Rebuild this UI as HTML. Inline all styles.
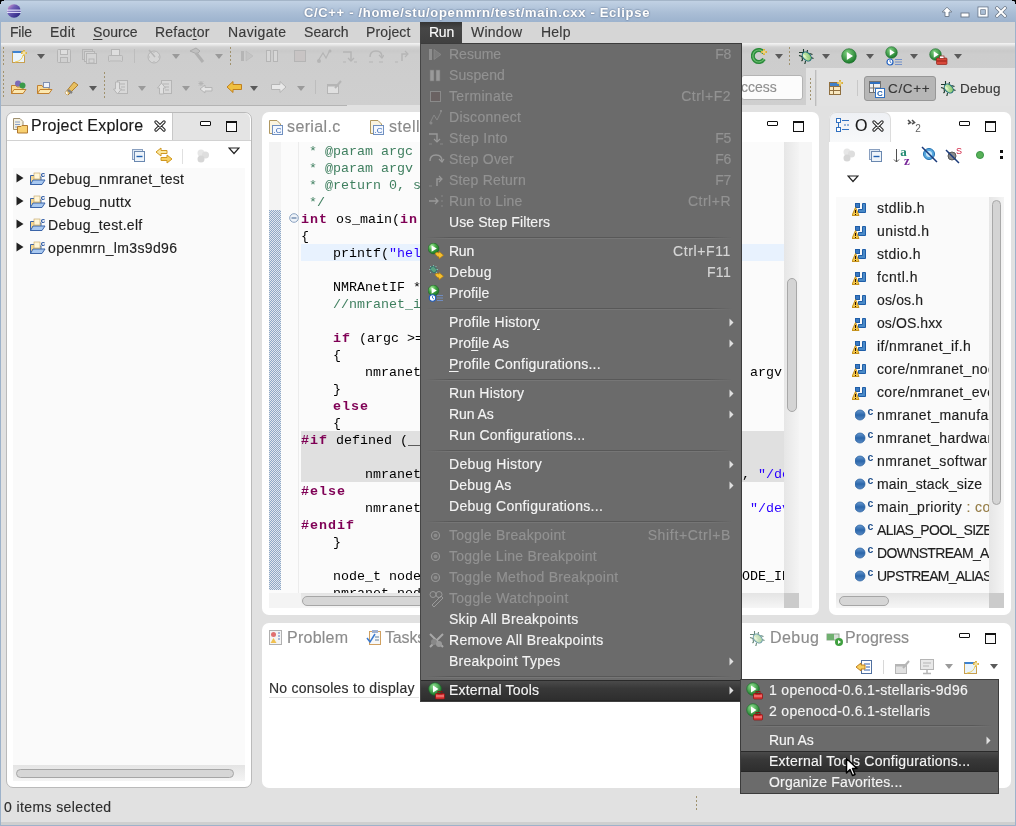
<!DOCTYPE html>
<html><head><meta charset="utf-8"><style>
*{box-sizing:border-box;margin:0;padding:0}
html,body{width:1016px;height:826px;overflow:hidden;background:#e1e1e1}
body{position:relative;font-family:"Liberation Sans",sans-serif;font-size:14px;letter-spacing:0.1px;color:#2e2e2e}
.a{position:absolute;display:block}
.t{position:absolute;white-space:nowrap;line-height:16px;will-change:transform;-webkit-text-stroke:0.15px currentColor}
u{text-underline-offset:1.5px}
.m{position:absolute;white-space:pre;will-change:transform;font-family:"Liberation Mono",monospace;font-size:13.33px;letter-spacing:0;line-height:17px;color:#000}
.k{color:#7f0055;font-weight:bold;letter-spacing:1px}
.c{color:#3f7f5f}
.s{color:#2a00ff}
</style></head><body>
<div class="a" style="left:0px;top:0px;width:1016px;height:22px;background:linear-gradient(#c3d3e5,#a9bdd5 60%,#9db3ce)"></div>
<div class="t" style="left:0px;top:5px;width:954px;text-align:center;color:#fff;font-weight:bold;font-size:13px;letter-spacing:0.68px;text-shadow:0 0 2px #4d6280,0 0 1px #4d6280">C/C++ - /home/stu/openmrn/test/main.cxx - Eclipse</div>
<svg class="a" style="left:6px;top:4px;" width="16" height="14" viewBox="0 0 16 14"><defs><linearGradient id="eg" x1="0" y1="0" x2="1" y2="1"><stop offset="0" stop-color="#e8a0d0"/><stop offset="0.35" stop-color="#7060b8"/><stop offset="1" stop-color="#1c1a78"/></linearGradient></defs><circle cx="8" cy="7" r="6.8" fill="url(#eg)"/><rect x="1" y="5.6" width="14" height="1.1" fill="#e8e8ff"/><rect x="1" y="7.8" width="14" height="1.1" fill="#e8e8ff"/></svg>
<svg class="a" style="left:941px;top:6px;" width="12" height="12" viewBox="0 0 12 12"><path d="M6 1.2 L10.8 6 L8 6 L8 10.5 L4 10.5 L4 6 L1.2 6 Z" fill="#fff" stroke="#6c7888" stroke-width="0.9" stroke-linejoin="round"/></svg>
<svg class="a" style="left:960px;top:12px;" width="10" height="6" viewBox="0 0 10 6"><rect x="1" y="1" width="8" height="4" fill="#fff" stroke="#6c7888" stroke-width="0.9"/></svg>
<svg class="a" style="left:977px;top:6px;" width="12" height="12" viewBox="0 0 12 12"><rect x="1" y="1" width="10" height="10" fill="none" stroke="#6c7888" stroke-width="0.9"/><rect x="2.5" y="2.5" width="7" height="7" fill="none" stroke="#fff" stroke-width="2"/><rect x="3.7" y="3.7" width="4.6" height="4.6" fill="none" stroke="#6c7888" stroke-width="0.7"/></svg>
<svg class="a" style="left:995px;top:6px;" width="12" height="12" viewBox="0 0 12 12"><path d="M2 2 L10 10 M10 2 L2 10" stroke="#6c7888" stroke-width="3.4" stroke-linecap="square"/><path d="M2 2 L10 10 M10 2 L2 10" stroke="#fff" stroke-width="2" stroke-linecap="square"/></svg>
<div class="a" style="left:0px;top:22px;width:1016px;height:21px;background:#d6d6d6"></div>
<div class="t" style="left:10px;top:24px;color:#3a3a3a;letter-spacing:-0.199px">File</div>
<div class="t" style="left:50px;top:24px;color:#3a3a3a;letter-spacing:0.262px">Edit</div>
<div class="t" style="left:93px;top:24px;color:#3a3a3a;letter-spacing:0.049px"><u>S</u>ource</div>
<div class="t" style="left:155px;top:24px;color:#3a3a3a;letter-spacing:0.205px">Refac<u>t</u>or</div>
<div class="t" style="left:228px;top:24px;color:#3a3a3a;letter-spacing:0.383px">Navigate</div>
<div class="t" style="left:304px;top:24px;color:#3a3a3a;letter-spacing:0.052px">Search</div>
<div class="t" style="left:366px;top:24px;color:#3a3a3a;letter-spacing:0.129px">Project</div>
<div class="t" style="left:471px;top:24px;color:#3a3a3a;letter-spacing:0.245px">Window</div>
<div class="t" style="left:541px;top:24px;color:#3a3a3a;letter-spacing:0.215px">Help</div>
<div class="a" style="left:0px;top:43px;width:1016px;height:62px;background:linear-gradient(#f4f4f4 0,#e6e6e6 2px,#d2d2d2 4px,#c9c9c9 8px,#cdcdcd 11px,#cfcfcf 100%)"></div>
<div class="a" style="left:0px;top:105px;width:347px;height:1px;background:#b4b4b4"></div>
<div class="a" style="left:0px;top:106px;width:1016px;height:5px;background:#e1e1e1"></div>
<svg class="a" style="left:3px;top:47px;" width="2" height="18" viewBox="0 0 2 18"><rect x="0" y="0" width="1" height="2" fill="#a0926e"/><rect x="0" y="4" width="1" height="2" fill="#a0926e"/><rect x="0" y="8" width="1" height="2" fill="#a0926e"/><rect x="0" y="12" width="1" height="2" fill="#a0926e"/><rect x="0" y="16" width="1" height="2" fill="#a0926e"/></svg>
<svg class="a" style="left:11px;top:48px;" width="17" height="16" viewBox="0 0 17 16"><rect x="1.5" y="3.5" width="12" height="11" fill="#eaf4fb" stroke="#c8a050"/><rect x="1.5" y="3" width="9" height="2" fill="#3c82d0"/><path d="M13 2 L13 8 M10 5 L16 5" stroke="#d0a020" stroke-width="2"/><path d="M13 2.5 L13 7.5 M10.5 5 L15.5 5" stroke="#fff8d0" stroke-width="1"/><path d="M4 14 Q11 13 12 7" stroke="#f0d060" fill="none"/></svg>
<svg class="a" style="left:37px;top:54px;" width="8" height="5" viewBox="0 0 8 5"><path d="M0 0 L8 0 L4 5 Z" fill="#5a5a5a"/></svg>
<svg class="a" style="left:56px;top:48px;" width="16" height="16" viewBox="0 0 16 16"><rect x="1.5" y="1.5" width="13" height="13" rx="1" fill="#d4d4d4" stroke="#b5b5b5"/><rect x="4.5" y="1.5" width="7" height="5" fill="#dedede" stroke="#b5b5b5"/><rect x="4.5" y="9.5" width="7" height="5" fill="#d0d0d0" stroke="#b5b5b5"/></svg>
<svg class="a" style="left:81px;top:48px;" width="17" height="17" viewBox="0 0 17 17"><rect x="1.5" y="1.5" width="10" height="10" fill="none" stroke="#b5b5b5"/><rect x="3.5" y="3.5" width="10" height="10" fill="#d4d4d4" stroke="#b5b5b5"/><rect x="5.5" y="5.5" width="10" height="10" fill="#d4d4d4" stroke="#b5b5b5"/><rect x="8" y="11" width="5" height="4" fill="none" stroke="#b5b5b5"/></svg>
<svg class="a" style="left:107px;top:48px;" width="17" height="16" viewBox="0 0 17 16"><rect x="4.5" y="1.5" width="8" height="6" fill="#dedede" stroke="#b5b5b5"/><rect x="1.5" y="7.5" width="14" height="6" rx="1" fill="#d0d0d0" stroke="#b5b5b5"/><rect x="3" y="12" width="11" height="2" fill="#c4c4c4"/></svg>
<div class="a" style="left:134px;top:49px;width:1px;height:14px;background:#bdbdbd"></div>
<svg class="a" style="left:146px;top:48px;" width="16" height="16" viewBox="0 0 16 16"><circle cx="8" cy="9" r="6" fill="#d6d6d6" stroke="#b5b5b5"/><path d="M3 2 L9 9" stroke="#b5b5b5" stroke-width="1.5"/><path d="M8 4 L8 5 M13 9 L12 9 M8 14 L8 13 M3 9 L4 9" stroke="#b5b5b5"/></svg>
<svg class="a" style="left:172px;top:54px;" width="8" height="5" viewBox="0 0 8 5"><path d="M0 0 L8 0 L4 5 Z" fill="#9a9a9a"/></svg>
<svg class="a" style="left:188px;top:47px;" width="18" height="17" viewBox="0 0 18 17"><path d="M2 4 L8 1 L12 4 L9 7 Z" fill="#c0c0c0" stroke="#aaa"/><path d="M8 6 L15 15" stroke="#b0b0b0" stroke-width="3"/></svg>
<svg class="a" style="left:215px;top:54px;" width="8" height="5" viewBox="0 0 8 5"><path d="M0 0 L8 0 L4 5 Z" fill="#9a9a9a"/></svg>
<svg class="a" style="left:230px;top:47px;" width="2" height="18" viewBox="0 0 2 18"><rect x="0" y="0" width="1" height="2" fill="#a0926e"/><rect x="0" y="4" width="1" height="2" fill="#a0926e"/><rect x="0" y="8" width="1" height="2" fill="#a0926e"/><rect x="0" y="12" width="1" height="2" fill="#a0926e"/><rect x="0" y="16" width="1" height="2" fill="#a0926e"/></svg>
<svg class="a" style="left:240px;top:48px;" width="16" height="16" viewBox="0 0 16 16"><rect x="1" y="3" width="3" height="10" fill="#b5b5b5"/><path d="M6 3 L13 8 L6 13 Z" fill="#c4c4c4" stroke="#b5b5b5" stroke-width="0.5"/></svg>
<svg class="a" style="left:264px;top:48px;" width="16" height="16" viewBox="0 0 16 16"><rect x="2.5" y="2.5" width="4" height="11" fill="#d6d6d6" stroke="#b5b5b5"/><rect x="9.5" y="2.5" width="4" height="11" fill="#d6d6d6" stroke="#b5b5b5"/></svg>
<svg class="a" style="left:292px;top:48px;" width="16" height="16" viewBox="0 0 16 16"><rect x="2.5" y="2.5" width="11" height="11" fill="#c8c4c4" stroke="#b5b5b5"/></svg>
<svg class="a" style="left:316px;top:48px;" width="16" height="16" viewBox="0 0 16 16"><path d="M2 13 L7 5 L10 10 L14 2" fill="none" stroke="#b5b5b5" stroke-width="1.2"/><circle cx="3" cy="13" r="2" fill="#b5b5b5"/><circle cx="14" cy="3" r="1.5" fill="#b5b5b5"/></svg>
<svg class="a" style="left:342px;top:48px;" width="16" height="16" viewBox="0 0 16 16"><path d="M1 4 L9 4 L9 12" fill="none" stroke="#b5b5b5" stroke-width="1.5"/><path d="M6 10 L9 13 L12 10" fill="none" stroke="#b5b5b5" stroke-width="1.3"/><path d="M1 14 L4 14 M12 14 L15 14" stroke="#b5b5b5"/></svg>
<svg class="a" style="left:368px;top:48px;" width="16" height="16" viewBox="0 0 16 16"><path d="M2 9 Q2 3 8 3 Q14 3 14 9" fill="none" stroke="#b5b5b5" stroke-width="1.5"/><path d="M11 7 L14 10 L16 7" fill="none" stroke="#b5b5b5" stroke-width="1.2"/><path d="M1 14 L5 14 M11 14 L15 14" stroke="#b5b5b5"/></svg>
<svg class="a" style="left:394px;top:48px;" width="16" height="16" viewBox="0 0 16 16"><path d="M8 13 L8 6 L13 6" fill="none" stroke="#b5b5b5" stroke-width="1.5"/><path d="M11 3 L14 6 L11 9" fill="none" stroke="#b5b5b5" stroke-width="1.2"/><path d="M1 14 L4 14" stroke="#b5b5b5"/></svg>
<svg class="a" style="left:751px;top:48px;" width="17" height="17" viewBox="0 0 17 17"><path d="M13 5 A6 6 0 1 0 13 11" fill="none" stroke="#2a8a3a" stroke-width="4"/><path d="M13 5 A6 6 0 1 0 13 11" fill="none" stroke="#6cc070" stroke-width="1.2"/><path d="M13 1 L13 7 M10 4 L16 4" stroke="#d0a020" stroke-width="2"/><path d="M13 1.5 L13 6.5 M10.5 4 L15.5 4" stroke="#fff4c0" stroke-width="0.8"/></svg>
<svg class="a" style="left:775px;top:54px;" width="8" height="5" viewBox="0 0 8 5"><path d="M0 0 L8 0 L4 5 Z" fill="#5a5a5a"/></svg>
<svg class="a" style="left:789px;top:47px;" width="2" height="18" viewBox="0 0 2 18"><rect x="0" y="0" width="1" height="2" fill="#a0926e"/><rect x="0" y="4" width="1" height="2" fill="#a0926e"/><rect x="0" y="8" width="1" height="2" fill="#a0926e"/><rect x="0" y="12" width="1" height="2" fill="#a0926e"/><rect x="0" y="16" width="1" height="2" fill="#a0926e"/></svg>
<svg class="a" style="left:796px;top:44px;" width="20" height="20" viewBox="0 0 20 20"><defs><radialGradient id="bug796_44" cx="0.3" cy="0.3" r="0.8"><stop offset="0" stop-color="#e8f8d0"/><stop offset="1" stop-color="#7ac060"/></radialGradient></defs><path d="M7.5 5 L7.5 9 M3 8.5 L7.5 8.5 M11.5 6 L11 8.5 M13.5 9.5 L16.5 10.5 M3 11.5 L6 12.5 L6.5 16 L5.5 17 M15 13.5 L17.5 14.5 M9.5 17 L9 19.5 L8.5 20" stroke="#1e3a2a" stroke-width="1.1" fill="none"/><ellipse cx="10.8" cy="12.5" rx="3.6" ry="5.2" transform="rotate(-45 10.8 12.5)" fill="url(#bug796_44)" stroke="#1a6a7a" stroke-width="1"/><path d="M9 10.5 L13 14.5" stroke="#7ac060" stroke-width="0.8" stroke-dasharray="1 1"/></svg>
<svg class="a" style="left:822px;top:54px;" width="8" height="5" viewBox="0 0 8 5"><path d="M0 0 L8 0 L4 5 Z" fill="#5a5a5a"/></svg>
<svg class="a" style="left:841px;top:48px;" width="16" height="16" viewBox="0 0 16 16"><defs><radialGradient id="grr841_48" cx="0.4" cy="0.3" r="0.7"><stop offset="0" stop-color="#80d080"/><stop offset="1" stop-color="#1a7a2a"/></radialGradient></defs><circle cx="8.0" cy="8.0" r="7.3" fill="url(#grr841_48)" stroke="#1a6a2a" stroke-width="0.6"/><path d="M5.8100000000000005 3.9849999999999994 L12.015 8.0 L5.8100000000000005 12.015 Z" fill="#fff"/></svg>
<svg class="a" style="left:866px;top:54px;" width="8" height="5" viewBox="0 0 8 5"><path d="M0 0 L8 0 L4 5 Z" fill="#5a5a5a"/></svg>
<svg class="a" style="left:885px;top:46px;" width="16" height="16" viewBox="0 0 16 16"><defs><radialGradient id="grr885_46" cx="0.4" cy="0.3" r="0.7"><stop offset="0" stop-color="#80d080"/><stop offset="1" stop-color="#1a7a2a"/></radialGradient></defs><circle cx="6.5" cy="6.5" r="5.8" fill="url(#grr885_46)" stroke="#1a6a2a" stroke-width="0.6"/><path d="M4.76 3.31 L9.69 6.5 L4.76 9.69 Z" fill="#fff"/></svg>
<svg class="a" style="left:886px;top:57px;" width="17" height="10" viewBox="0 0 17 10"><circle cx="4" cy="5" r="3" fill="#fff" stroke="#2060c0" stroke-width="1.2"/><path d="M4 3 L4 5 L5.5 6" stroke="#2060c0" stroke-width="0.8" fill="none"/><path d="M9 2.5 L16 2.5 M9 5 L16 5 M9 7.5 L16 7.5" stroke="#6a8ac8" stroke-width="0.9"/></svg>
<svg class="a" style="left:910px;top:54px;" width="8" height="5" viewBox="0 0 8 5"><path d="M0 0 L8 0 L4 5 Z" fill="#5a5a5a"/></svg>
<svg class="a" style="left:929px;top:48px;" width="16" height="16" viewBox="0 0 16 16"><defs><radialGradient id="grr929_48" cx="0.4" cy="0.3" r="0.7"><stop offset="0" stop-color="#80d080"/><stop offset="1" stop-color="#1a7a2a"/></radialGradient></defs><circle cx="6.5" cy="6.5" r="5.8" fill="url(#grr929_48)" stroke="#1a6a2a" stroke-width="0.6"/><path d="M4.76 3.31 L9.69 6.5 L4.76 9.69 Z" fill="#fff"/></svg>
<svg class="a" style="left:936px;top:55px;" width="12" height="10" viewBox="0 0 12 10"><rect x="0.5" y="3" width="10.5" height="6.5" rx="1" fill="#d8483a" stroke="#902018" stroke-width="0.7"/><rect x="3.5" y="1" width="4.5" height="2.5" fill="#fff" stroke="#902018" stroke-width="0.7"/><path d="M1 6 L10.5 6" stroke="#901a10" stroke-width="0.9"/></svg>
<svg class="a" style="left:954px;top:54px;" width="8" height="5" viewBox="0 0 8 5"><path d="M0 0 L8 0 L4 5 Z" fill="#5a5a5a"/></svg>
<svg class="a" style="left:3px;top:71px;" width="2" height="28" viewBox="0 0 2 28"><rect x="0" y="0" width="1" height="2" fill="#a0926e"/><rect x="0" y="4" width="1" height="2" fill="#a0926e"/><rect x="0" y="8" width="1" height="2" fill="#a0926e"/><rect x="0" y="12" width="1" height="2" fill="#a0926e"/><rect x="0" y="16" width="1" height="2" fill="#a0926e"/><rect x="0" y="20" width="1" height="2" fill="#a0926e"/><rect x="0" y="24" width="1" height="2" fill="#a0926e"/></svg>
<svg class="a" style="left:10px;top:79px;" width="18" height="16" viewBox="0 0 18 16"><path d="M1.5 6.5 L6 6.5 L7 8 L13 8 L13 14.5 L1.5 14.5 Z" fill="#f8d890" stroke="#c08030"/><path d="M1.5 14.5 L4 10.5 L16 10.5 L13 14.5 Z" fill="#fce8b0" stroke="#c08030"/><circle cx="8" cy="4.5" r="3" fill="#7a6ab8"/><circle cx="12.5" cy="6.5" r="3" fill="#3a9a4a"/></svg>
<svg class="a" style="left:36px;top:79px;" width="18" height="16" viewBox="0 0 18 16"><path d="M1.5 6.5 L6 6.5 L7 8 L13 8 L13 14.5 L1.5 14.5 Z" fill="#f8d890" stroke="#c08030"/><path d="M1.5 14.5 L4 10.5 L16 10.5 L13 14.5 Z" fill="#fce8b0" stroke="#c08030"/><rect x="7.5" y="3.5" width="6" height="5" fill="#eef2fa" stroke="#8090b0"/></svg>
<svg class="a" style="left:62px;top:79px;" width="18" height="17" viewBox="0 0 18 17"><path d="M3 14 L12 3 L16 6 L6 16 Z" fill="#e8c060" stroke="#b08030"/><path d="M3 14 L6 16 L5 12 Z" fill="#fff"/><path d="M6 11 L10 14" stroke="#808080" stroke-width="2.5"/></svg>
<svg class="a" style="left:89px;top:86px;" width="8" height="5" viewBox="0 0 8 5"><path d="M0 0 L8 0 L4 5 Z" fill="#5a5a5a"/></svg>
<svg class="a" style="left:104px;top:72px;" width="2" height="27" viewBox="0 0 2 27"><rect x="0" y="0" width="1" height="2" fill="#a0926e"/><rect x="0" y="4" width="1" height="2" fill="#a0926e"/><rect x="0" y="8" width="1" height="2" fill="#a0926e"/><rect x="0" y="12" width="1" height="2" fill="#a0926e"/><rect x="0" y="16" width="1" height="2" fill="#a0926e"/><rect x="0" y="20" width="1" height="2" fill="#a0926e"/><rect x="0" y="24" width="1" height="2" fill="#a0926e"/></svg>
<svg class="a" style="left:112px;top:79px;" width="17" height="17" viewBox="0 0 17 17"><rect x="5.5" y="1.5" width="10" height="13" fill="#d8d8d8" stroke="#b5b5b5"/><path d="M7 5 L13 5 M9 8 L13 8 M9 11 L13 11" stroke="#b5b5b5"/><path d="M1.5 10 L5.5 15 L9.5 10 L7.5 10 L7.5 3 L3.5 3 L3.5 10 Z" fill="#e0e0e0" stroke="#b5b5b5"/></svg>
<svg class="a" style="left:138px;top:86px;" width="8" height="5" viewBox="0 0 8 5"><path d="M0 0 L8 0 L4 5 Z" fill="#9a9a9a"/></svg>
<svg class="a" style="left:156px;top:79px;" width="17" height="17" viewBox="0 0 17 17"><rect x="5.5" y="1.5" width="10" height="13" fill="#d8d8d8" stroke="#b5b5b5"/><path d="M7 5 L13 5 M9 8 L13 8 M9 11 L13 11" stroke="#b5b5b5"/><path d="M1.5 9 L5.5 4 L9.5 9 L7.5 9 L7.5 15 L3.5 15 L3.5 9 Z" fill="#e0e0e0" stroke="#b5b5b5"/></svg>
<svg class="a" style="left:182px;top:86px;" width="8" height="5" viewBox="0 0 8 5"><path d="M0 0 L8 0 L4 5 Z" fill="#9a9a9a"/></svg>
<svg class="a" style="left:197px;top:80px;" width="18" height="16" viewBox="0 0 18 16"><path d="M3 9 L8 5 L8 7.5 L15 7.5 L15 11 L8 11 L8 13 Z" fill="#e4e4e4" stroke="#b5b5b5"/><path d="M4 1 L4 6 M1.5 3.5 L6.5 3.5 M2 1.5 L6 5.5 M6 1.5 L2 5.5" stroke="#b5b5b5"/></svg>
<svg class="a" style="left:226px;top:80px;" width="17" height="14" viewBox="0 0 17 14"><path d="M1 7 L7 1.5 L7 4.5 L15.5 4.5 L15.5 9.5 L7 9.5 L7 12.5 Z" fill="#f0c040" stroke="#c08020"/></svg>
<svg class="a" style="left:250px;top:86px;" width="8" height="5" viewBox="0 0 8 5"><path d="M0 0 L8 0 L4 5 Z" fill="#5a5a5a"/></svg>
<svg class="a" style="left:270px;top:80px;" width="17" height="14" viewBox="0 0 17 14"><path d="M16 7 L10 1.5 L10 4.5 L1.5 4.5 L1.5 9.5 L10 9.5 L10 12.5 Z" fill="#e8e8e8" stroke="#b5b5b5"/></svg>
<svg class="a" style="left:297px;top:86px;" width="8" height="5" viewBox="0 0 8 5"><path d="M0 0 L8 0 L4 5 Z" fill="#9a9a9a"/></svg>
<div class="a" style="left:315px;top:80px;width:1px;height:14px;background:#bdbdbd"></div>
<svg class="a" style="left:326px;top:79px;" width="17" height="16" viewBox="0 0 17 16"><rect x="1.5" y="5.5" width="11" height="9" fill="#e0e0e0" stroke="#b5b5b5"/><rect x="1.5" y="5.5" width="11" height="2" fill="#b5b5b5"/><path d="M9 9 L15 2" stroke="#b5b5b5" stroke-width="2"/></svg>
<div class="a" style="left:741px;top:75px;width:62px;height:25px;background:#fcfcfc;border:1px solid #b4b4b4;border-radius:3px"></div>
<div class="t" style="left:741px;top:79px;color:#8f8f8f;letter-spacing:0.006px">ccess</div>
<div class="a" style="left:806px;top:68px;width:210px;height:38px;background:#e2e2e2"></div>
<div class="a" style="left:815px;top:70px;width:1px;height:36px;background:#bdbdbd"></div>
<div class="a" style="left:816px;top:70px;width:1px;height:36px;background:#d4d4d4"></div>
<svg class="a" style="left:810px;top:78px;" width="2" height="22" viewBox="0 0 2 22"><rect x="0" y="0" width="1" height="2" fill="#a0926e"/><rect x="0" y="4" width="1" height="2" fill="#a0926e"/><rect x="0" y="8" width="1" height="2" fill="#a0926e"/><rect x="0" y="12" width="1" height="2" fill="#a0926e"/><rect x="0" y="16" width="1" height="2" fill="#a0926e"/><rect x="0" y="20" width="1" height="2" fill="#a0926e"/></svg>
<svg class="a" style="left:828px;top:79px;" width="17" height="17" viewBox="0 0 17 17"><rect x="1.5" y="3.5" width="11" height="12" fill="#f8e8c0" stroke="#907040"/><path d="M1.5 7.5 L12.5 7.5 M5.5 7.5 L5.5 15.5 M1.5 11.5 L12.5 11.5" stroke="#907040"/><rect x="2" y="4" width="10" height="3" fill="#4080c8"/><path d="M12 1 L12 7 M9 4 L15 4" stroke="#d0a020" stroke-width="2"/><path d="M12 1.5 L12 6.5 M9.5 4 L14.5 4" stroke="#fff4c0" stroke-width="0.8"/></svg>
<div class="a" style="left:857px;top:80px;width:1px;height:16px;background:#c8c8c8"></div>
<div class="a" style="left:864px;top:76px;width:72px;height:25px;background:#b6b6b6;border:1px solid #979797;border-radius:3px"></div>
<svg class="a" style="left:868px;top:80px;;will-change:transform" width="18" height="18" viewBox="0 0 18 18"><rect x="1.5" y="1.5" width="11" height="11" fill="#f0f0f0" stroke="#707070"/><rect x="2" y="2" width="10" height="2" fill="#3070c0"/><path d="M5.5 4 L5.5 12.5 M1.5 8 L12.5 8" stroke="#707070"/><rect x="7.5" y="8.5" width="9" height="9" fill="#fff" stroke="#3070c0"/><text x="12" y="16" font-size="8" font-weight="bold" fill="#2060b0" text-anchor="middle" font-family="Liberation Sans">C</text></svg>
<div class="t" style="left:888px;top:81px;color:#383838;font-size:13.5px;letter-spacing:0.65px">C/C++</div>
<svg class="a" style="left:938px;top:76px;" width="20" height="20" viewBox="0 0 20 20"><defs><radialGradient id="bug938_76" cx="0.3" cy="0.3" r="0.8"><stop offset="0" stop-color="#e8f8d0"/><stop offset="1" stop-color="#7ac060"/></radialGradient></defs><path d="M7.5 5 L7.5 9 M3 8.5 L7.5 8.5 M11.5 6 L11 8.5 M13.5 9.5 L16.5 10.5 M3 11.5 L6 12.5 L6.5 16 L5.5 17 M15 13.5 L17.5 14.5 M9.5 17 L9 19.5 L8.5 20" stroke="#1e3a2a" stroke-width="1.1" fill="none"/><ellipse cx="10.8" cy="12.5" rx="3.6" ry="5.2" transform="rotate(-45 10.8 12.5)" fill="url(#bug938_76)" stroke="#1a6a7a" stroke-width="1"/><path d="M9 10.5 L13 14.5" stroke="#7ac060" stroke-width="0.8" stroke-dasharray="1 1"/></svg>
<div class="t" style="left:960px;top:81px;color:#383838;font-size:13.5px;letter-spacing:0.2px">Debug</div>
<div class="a" style="left:6px;top:112px;width:246px;height:676px;background:#fff;border:1px solid #bababa;border-radius:7px"></div>
<div class="a" style="left:172px;top:113px;width:78px;height:27px;background:#e4e4e4;border-top-right-radius:6px;border-left:1px solid #c8c8c8;border-bottom-left-radius:0"></div>
<div class="a" style="left:7px;top:140px;width:244px;height:1px;background:#d2d2d2"></div>
<svg class="a" style="left:12px;top:117px;" width="17" height="17" viewBox="0 0 17 17"><path d="M1.5 1.5 L8 1.5 L11 4.5 L11 12.5 L1.5 12.5 Z" fill="#f4f0e0" stroke="#a09070"/><path d="M3 5 L8 5 M3 7.5 L8 7.5 M3 10 L6 10" stroke="#8aa0c8"/><path d="M5.5 9.5 L9 9.5 L10 8.5 L15.5 8.5 L15.5 16 L5.5 16 Z" fill="#f8d070" stroke="#b07830"/></svg>
<div class="t" style="left:31px;top:118px;font-size:16px;color:#1a1a1a;letter-spacing:0.255px">Project Explore</div>
<svg class="a" style="left:154px;top:120px;" width="12" height="12" viewBox="0 0 12 12"><path d="M2 2 L10 10 M10 2 L2 10" stroke="#222" stroke-width="3.2" stroke-linecap="round"/><path d="M2 2 L10 10 M10 2 L2 10" stroke="#fff" stroke-width="1.2" stroke-linecap="round"/></svg>
<div class="a" style="left:200px;top:121px;width:11px;height:5px;border:1.3px solid #111;background:#fff;border-radius:1px"></div>
<div class="a" style="left:226px;top:121px;width:11px;height:11px;border:1.3px solid #111;border-top-width:2.3px;background:#fafafa"></div>
<svg class="a" style="left:131px;top:148px;" width="15" height="15" viewBox="0 0 15 15"><rect x="1.5" y="1.5" width="10" height="10" fill="#dde8f4" stroke="#8aa0c0"/><rect x="3.5" y="3.5" width="10" height="10" fill="#eef4fa" stroke="#6a88b0"/><path d="M5.5 8.5 L11.5 8.5" stroke="#2060b0" stroke-width="1.4"/></svg>
<svg class="a" style="left:155px;top:147px;" width="18" height="17" viewBox="0 0 18 17"><path d="M1 5 L6 1 L6 3.5 L12 3.5 L12 6.5 L6 6.5 L6 9 Z" fill="#fce8a0" stroke="#d09820"/><path d="M17 12 L12 8 L12 10.5 L6 10.5 L6 13.5 L12 13.5 L12 16 Z" fill="#f8d060" stroke="#d09820"/></svg>
<div class="a" style="left:182px;top:149px;width:1px;height:15px;background:#e0e0e0"></div>
<svg class="a" style="left:195px;top:148px;" width="15" height="15" viewBox="0 0 15 15"><circle cx="6" cy="5" r="3.5" fill="#e6e6e6"/><circle cx="10.5" cy="7" r="3.5" fill="#dedede"/><circle cx="6" cy="11" r="3.5" fill="#d6d6d6"/></svg>
<svg class="a" style="left:228px;top:147px;" width="12" height="8" viewBox="0 0 12 8"><path d="M1 1 L11 1 L6 6.5 Z" fill="#fff" stroke="#222" stroke-width="1.2"/></svg>
<div class="a" style="left:13px;top:168px;width:232px;height:597px;background:#fafafa"></div>
<svg class="a" style="left:16px;top:173px;" width="8" height="10" viewBox="0 0 8 10"><path d="M0.5 0.5 L7.5 5 L0.5 9.5 Z" fill="#222"/></svg>
<svg class="a" style="left:29px;top:170px;;will-change:transform" width="17" height="16" viewBox="0 0 17 16"><path d="M1.5 5.5 L5 5.5 L6 7 L12 7 L12 14.5 L1.5 14.5 Z" fill="#f8d890" stroke="#3a64a8"/><path d="M1.5 14.5 L4 10 L16 10 L13 14.5 Z" fill="#a8c8f0" stroke="#3a64a8"/><rect x="5" y="3" width="6" height="6" fill="#fff6d8" stroke="#c0a060" stroke-width="0.6"/><text x="14" y="7" font-size="8" font-weight="bold" fill="#2050a0" text-anchor="middle" font-family="Liberation Sans">c</text></svg>
<div class="t" style="left:48px;top:171px;color:#1e1e1e;letter-spacing:0.308px">Debug_nmranet_test</div>
<svg class="a" style="left:16px;top:196px;" width="8" height="10" viewBox="0 0 8 10"><path d="M0.5 0.5 L7.5 5 L0.5 9.5 Z" fill="#222"/></svg>
<svg class="a" style="left:29px;top:193px;;will-change:transform" width="17" height="16" viewBox="0 0 17 16"><path d="M1.5 5.5 L5 5.5 L6 7 L12 7 L12 14.5 L1.5 14.5 Z" fill="#f8d890" stroke="#3a64a8"/><path d="M1.5 14.5 L4 10 L16 10 L13 14.5 Z" fill="#a8c8f0" stroke="#3a64a8"/><rect x="5" y="3" width="6" height="6" fill="#fff6d8" stroke="#c0a060" stroke-width="0.6"/><text x="14" y="7" font-size="8" font-weight="bold" fill="#2050a0" text-anchor="middle" font-family="Liberation Sans">c</text></svg>
<div class="t" style="left:48px;top:194px;color:#1e1e1e;letter-spacing:0.385px">Debug_nuttx</div>
<svg class="a" style="left:16px;top:219px;" width="8" height="10" viewBox="0 0 8 10"><path d="M0.5 0.5 L7.5 5 L0.5 9.5 Z" fill="#222"/></svg>
<svg class="a" style="left:29px;top:216px;;will-change:transform" width="17" height="16" viewBox="0 0 17 16"><path d="M1.5 5.5 L5 5.5 L6 7 L12 7 L12 14.5 L1.5 14.5 Z" fill="#f8d890" stroke="#3a64a8"/><path d="M1.5 14.5 L4 10 L16 10 L13 14.5 Z" fill="#a8c8f0" stroke="#3a64a8"/><rect x="5" y="3" width="6" height="6" fill="#fff6d8" stroke="#c0a060" stroke-width="0.6"/><text x="14" y="7" font-size="8" font-weight="bold" fill="#2050a0" text-anchor="middle" font-family="Liberation Sans">c</text></svg>
<div class="t" style="left:48px;top:217px;color:#1e1e1e;letter-spacing:0.305px">Debug_test.elf</div>
<svg class="a" style="left:16px;top:242px;" width="8" height="10" viewBox="0 0 8 10"><path d="M0.5 0.5 L7.5 5 L0.5 9.5 Z" fill="#222"/></svg>
<svg class="a" style="left:29px;top:239px;;will-change:transform" width="17" height="16" viewBox="0 0 17 16"><path d="M1.5 5.5 L5 5.5 L6 7 L12 7 L12 14.5 L1.5 14.5 Z" fill="#f8d890" stroke="#3a64a8"/><path d="M1.5 14.5 L4 10 L16 10 L13 14.5 Z" fill="#a8c8f0" stroke="#3a64a8"/><rect x="5" y="3" width="6" height="6" fill="#fff6d8" stroke="#c0a060" stroke-width="0.6"/><text x="14" y="7" font-size="8" font-weight="bold" fill="#2050a0" text-anchor="middle" font-family="Liberation Sans">c</text></svg>
<div class="t" style="left:48px;top:240px;color:#1e1e1e;letter-spacing:0.351px">openmrn_lm3s9d96</div>
<div class="a" style="left:13px;top:765px;width:232px;height:16px;background:linear-gradient(#e4e4e4,#f4f4f4)"></div>
<div class="a" style="left:16px;top:769px;width:218px;height:9px;background:#d6d6d6;border:1px solid #a6a6a6;border-radius:5px"></div>
<div class="a" style="left:262px;top:112px;width:557px;height:503px;background:#fff;border-radius:7px"></div>
<svg class="a" style="left:268px;top:119px;;will-change:transform" width="15" height="16" viewBox="0 0 15 16"><path d="M1.5 1.5 L9 1.5 L12.5 5 L12.5 14.5 L1.5 14.5 Z" fill="#fbf4e0" stroke="#b09860"/><rect x="4.5" y="6.5" width="10" height="9" fill="#f4f8ff" stroke="#7090c0"/><text x="9.5" y="14" font-size="8" fill="#3060b0" text-anchor="middle" font-family="Liberation Sans">.C</text></svg>
<div class="t" style="left:287px;top:119px;font-size:16px;color:#8a8a8a;letter-spacing:0.381px">serial.c</div>
<svg class="a" style="left:369px;top:119px;;will-change:transform" width="15" height="16" viewBox="0 0 15 16"><path d="M1.5 1.5 L9 1.5 L12.5 5 L12.5 14.5 L1.5 14.5 Z" fill="#fbf4e0" stroke="#b09860"/><rect x="4.5" y="6.5" width="10" height="9" fill="#f4f8ff" stroke="#7090c0"/><text x="9.5" y="14" font-size="8" fill="#3060b0" text-anchor="middle" font-family="Liberation Sans">.C</text></svg>
<div class="t" style="left:389px;top:119px;font-size:16px;color:#8a8a8a;letter-spacing:0.556px">stell</div>
<div class="a" style="left:767px;top:121px;width:11px;height:5px;border:1.3px solid #111;background:#fff;border-radius:1px"></div>
<div class="a" style="left:793px;top:121px;width:11px;height:11px;border:1.3px solid #111;border-top-width:2.3px;background:#fafafa"></div>
<div class="a" style="left:269px;top:142px;width:543px;height:451px;background:#fbfbfb"></div>
<div class="a" style="left:269px;top:142px;width:12px;height:68px;background:#f3f3f3"></div>
<svg class="a" style="left:269px;top:210px;" width="12" height="380" viewBox="0 0 12 380"><defs><pattern id="hp" width="2" height="2" patternUnits="userSpaceOnUse"><rect width="2" height="2" fill="#e2e7ee"/><rect width="1" height="1" fill="#8ea8c6"/><rect x="1" y="1" width="1" height="1" fill="#8ea8c6"/></pattern></defs><rect width="12" height="380" fill="url(#hp)"/></svg>
<div class="a" style="left:298px;top:142px;width:1px;height:451px;background:#ececec"></div>
<div class="a" style="left:301px;top:244px;width:483px;height:17px;background:#e8f2fe"></div>
<div class="a" style="left:301px;top:431px;width:483px;height:51px;background:#e0e0e0"></div>
<svg class="a" style="left:289px;top:213px;" width="10" height="10" viewBox="0 0 10 10"><circle cx="5" cy="5" r="4.3" fill="#eef3f9" stroke="#8aa2c0"/><path d="M2.5 5 L7.5 5" stroke="#5a78a0" stroke-width="1.2"/></svg>
<div class="m" style="left:301px;top:143px"> <span class="c">* @param argc</span></div>
<div class="m" style="left:301px;top:160px"> <span class="c">* @param argv</span></div>
<div class="m" style="left:301px;top:177px"> <span class="c">* @return 0, s</span></div>
<div class="m" style="left:301px;top:194px"> <span class="c">*/</span></div>
<div class="m" style="left:301px;top:211px"><span class="k">int</span> os_main(<span class="k">in</span></div>
<div class="m" style="left:301px;top:228px">{</div>
<div class="m" style="left:301px;top:245px">    printf(<span class="s">"hel</span></div>
<div class="m" style="left:301px;top:262px"></div>
<div class="m" style="left:301px;top:279px">    NMRAnetIF *</div>
<div class="m" style="left:301px;top:296px">    <span class="c">//nmranet_i</span></div>
<div class="m" style="left:301px;top:313px"></div>
<div class="m" style="left:301px;top:330px">    <span class="k">if</span> (argc &gt;=</div>
<div class="m" style="left:301px;top:347px">    {</div>
<div class="m" style="left:301px;top:364px">        nmranet</div>
<div class="m" style="left:301px;top:381px">    }</div>
<div class="m" style="left:301px;top:398px">    <span class="k">else</span></div>
<div class="m" style="left:301px;top:415px">    {</div>
<div class="m" style="left:301px;top:432px"><span class="k">#if</span> defined (__</div>
<div class="m" style="left:301px;top:449px"></div>
<div class="m" style="left:301px;top:466px">        nmranet</div>
<div class="m" style="left:301px;top:483px"><span class="k">#else</span></div>
<div class="m" style="left:301px;top:500px">        nmranet</div>
<div class="m" style="left:301px;top:517px"><span class="k">#endif</span></div>
<div class="m" style="left:301px;top:534px">    }</div>
<div class="m" style="left:301px;top:551px"></div>
<div class="m" style="left:301px;top:568px">    node_t node</div>
<div class="m" style="left:301px;top:585px">    nmranet_nod</div>
<div class="m" style="left:742px;top:364px;width:43px;overflow:hidden"> argv[</div>
<div class="m" style="left:742px;top:466px;width:43px;overflow:hidden">, <span class="s">"/de</span></div>
<div class="m" style="left:742px;top:500px;width:43px;overflow:hidden"> <span class="s">"/dev</span></div>
<div class="m" style="left:742px;top:568px;width:43px;overflow:hidden">ODE_ID</div>
<div class="a" style="left:784px;top:142px;width:15px;height:451px;background:linear-gradient(90deg,#e6e6e6,#f4f4f4)"></div>
<div class="a" style="left:787px;top:278px;width:10px;height:134px;background:#d4d4d4;border:1px solid #a8a8a8;border-radius:5px"></div>
<div class="a" style="left:799px;top:142px;width:13px;height:451px;background:#f6f6f6"></div>
<div class="a" style="left:269px;top:593px;width:515px;height:15px;background:linear-gradient(#e4e4e4,#f6f6f6)"></div>
<div class="a" style="left:269px;top:593px;width:32px;height:15px;background:#f4f4f4"></div>
<div class="a" style="left:302px;top:596px;width:440px;height:10px;background:#d6d6d6;border:1px solid #a6a6a6;border-radius:5px"></div>
<div class="a" style="left:784px;top:593px;width:15px;height:15px;background:#cbcbcb"></div>
<div class="a" style="left:799px;top:593px;width:13px;height:15px;background:#f6f6f6"></div>
<div class="a" style="left:829px;top:112px;width:182px;height:503px;background:#fff;border-radius:7px"></div>
<div class="a" style="left:829px;top:112px;width:62px;height:30px;background:linear-gradient(#eef0f4,#f8f9fa);border:1px solid #dcdcdc;border-bottom:none;border-radius:7px 7px 0 0"></div>
<svg class="a" style="left:835px;top:117px;" width="16" height="16" viewBox="0 0 16 16"><rect x="1.5" y="1.5" width="4" height="4" fill="#fff" stroke="#3070c0"/><rect x="1.5" y="10.5" width="4" height="4" fill="#fff" stroke="#3070c0"/><path d="M7 3.5 L14 3.5 M9 8 L11 8 M12 8 L14 8 M7 12.5 L14 12.5" stroke="#3070c0" stroke-width="1.2"/><path d="M3.5 5.5 L3.5 10.5" stroke="#3070c0"/></svg>
<div class="t" style="left:855px;top:118px;font-size:16px;color:#1a1a1a;letter-spacing:-0.641px">O</div>
<svg class="a" style="left:872px;top:120px;" width="12" height="12" viewBox="0 0 12 12"><path d="M2 2 L10 10 M10 2 L2 10" stroke="#222" stroke-width="3.2" stroke-linecap="round"/><path d="M2 2 L10 10 M10 2 L2 10" stroke="#fff" stroke-width="1.2" stroke-linecap="round"/></svg>
<svg class="a" style="left:906px;top:118px;;will-change:transform" width="16" height="16" viewBox="0 0 16 16"><path d="M2 2 L4.5 4.5 L2 6 M6 2 L8.5 4.5 L6 6" stroke="#505050" stroke-width="1.6" fill="none"/><text x="12" y="14" font-size="10" fill="#606060" text-anchor="middle" font-family="Liberation Sans">2</text></svg>
<div class="a" style="left:959px;top:121px;width:11px;height:5px;border:1.3px solid #111;background:#fff;border-radius:1px"></div>
<div class="a" style="left:985px;top:121px;width:11px;height:11px;border:1.3px solid #111;border-top-width:2.3px;background:#fafafa"></div>
<svg class="a" style="left:841px;top:147px;" width="15" height="15" viewBox="0 0 15 15"><circle cx="6" cy="5" r="3.5" fill="#e6e6e6"/><circle cx="10.5" cy="7" r="3.5" fill="#dedede"/><circle cx="6" cy="11" r="3.5" fill="#d6d6d6"/></svg>
<svg class="a" style="left:868px;top:148px;" width="15" height="15" viewBox="0 0 15 15"><rect x="1.5" y="1.5" width="10" height="10" fill="#dde8f4" stroke="#8aa0c0"/><rect x="3.5" y="3.5" width="10" height="10" fill="#eef4fa" stroke="#6a88b0"/><path d="M5.5 8.5 L11.5 8.5" stroke="#2060b0" stroke-width="1.4"/></svg>
<svg class="a" style="left:893px;top:146px;;will-change:transform" width="20" height="19" viewBox="0 0 20 19"><path d="M3.5 3 L3.5 16 M1 13.5 L3.5 16 L6 13.5" stroke="#505050" fill="none"/><text x="10.5" y="9.5" font-size="13" font-weight="bold" fill="#1f8a70" text-anchor="middle" font-family="Liberation Serif">a</text><text x="14" y="18.5" font-size="13" font-weight="bold" fill="#7a2a9a" text-anchor="middle" font-family="Liberation Serif">z</text></svg>
<svg class="a" style="left:921px;top:146px;" width="17" height="17" viewBox="0 0 17 17"><circle cx="8" cy="8" r="5.5" fill="#5aaae0" stroke="#2070b0"/><circle cx="8" cy="8" r="3" fill="#c8e8fa"/><path d="M1 1 L16 16" stroke="#1a3a7a" stroke-width="1.5"/></svg>
<svg class="a" style="left:945px;top:146px;;will-change:transform" width="18" height="18" viewBox="0 0 18 18"><circle cx="7" cy="10" r="4" fill="#8a8a8a" stroke="#5a5a5a"/><path d="M1 4 L14 17" stroke="#1a3a7a" stroke-width="1.5"/><text x="14" y="8" font-size="9" fill="#d02040" text-anchor="middle" font-family="Liberation Sans">S</text></svg>
<svg class="a" style="left:975px;top:150px;" width="10" height="10" viewBox="0 0 10 10"><circle cx="5" cy="5" r="3.6" fill="#58b058" stroke="#2a8a3a" stroke-width="0.8"/></svg>
<div class="a" style="left:1000px;top:150px;width:3px;height:3px;background:#111"></div>
<div class="a" style="left:1000px;top:156px;width:3px;height:3px;background:#111"></div>
<svg class="a" style="left:847px;top:175px;" width="12" height="8" viewBox="0 0 12 8"><path d="M1 1 L11 1 L6 6.5 Z" fill="#fff" stroke="#222" stroke-width="1.2"/></svg>
<div class="a" style="left:836px;top:197px;width:153px;height:396px;background:#fafafa"></div>
<div class="a" style="left:836px;top:197px;width:153px;height:396px;overflow:hidden">
<svg class="a" style="left:16px;top:1px;" width="16" height="19" viewBox="0 0 16 19"><rect x="3.5" y="5.5" width="4" height="4" fill="#3a78c0" stroke="#1f5ea8"/><path d="M10.5 5.5 L13.5 5.5 L13.5 14.5 L6.5 14.5 L6.5 11.5 L10.5 11.5 Z" fill="#4a8ac8" stroke="#1f5ea8"/><path d="M3.5 9.5 L7 17.5 L0 17.5 Z" fill="#f4c848" stroke="#c08a10" stroke-width="0.9" stroke-linejoin="round"/><rect x="3" y="12" width="1" height="3" fill="#301000"/><rect x="3" y="16" width="1" height="1" fill="#301000"/></svg>
<div class="t" style="left:41px;top:3px;color:#1e1e1e;letter-spacing:0.449px">stdlib.h</div>
<svg class="a" style="left:16px;top:24px;" width="16" height="19" viewBox="0 0 16 19"><rect x="3.5" y="5.5" width="4" height="4" fill="#3a78c0" stroke="#1f5ea8"/><path d="M10.5 5.5 L13.5 5.5 L13.5 14.5 L6.5 14.5 L6.5 11.5 L10.5 11.5 Z" fill="#4a8ac8" stroke="#1f5ea8"/><path d="M3.5 9.5 L7 17.5 L0 17.5 Z" fill="#f4c848" stroke="#c08a10" stroke-width="0.9" stroke-linejoin="round"/><rect x="3" y="12" width="1" height="3" fill="#301000"/><rect x="3" y="16" width="1" height="1" fill="#301000"/></svg>
<div class="t" style="left:41px;top:26px;color:#1e1e1e;letter-spacing:0.441px">unistd.h</div>
<svg class="a" style="left:16px;top:47px;" width="16" height="19" viewBox="0 0 16 19"><rect x="3.5" y="5.5" width="4" height="4" fill="#3a78c0" stroke="#1f5ea8"/><path d="M10.5 5.5 L13.5 5.5 L13.5 14.5 L6.5 14.5 L6.5 11.5 L10.5 11.5 Z" fill="#4a8ac8" stroke="#1f5ea8"/><path d="M3.5 9.5 L7 17.5 L0 17.5 Z" fill="#f4c848" stroke="#c08a10" stroke-width="0.9" stroke-linejoin="round"/><rect x="3" y="12" width="1" height="3" fill="#301000"/><rect x="3" y="16" width="1" height="1" fill="#301000"/></svg>
<div class="t" style="left:41px;top:49px;color:#1e1e1e;letter-spacing:0.366px">stdio.h</div>
<svg class="a" style="left:16px;top:70px;" width="16" height="19" viewBox="0 0 16 19"><rect x="3.5" y="5.5" width="4" height="4" fill="#3a78c0" stroke="#1f5ea8"/><path d="M10.5 5.5 L13.5 5.5 L13.5 14.5 L6.5 14.5 L6.5 11.5 L10.5 11.5 Z" fill="#4a8ac8" stroke="#1f5ea8"/><path d="M3.5 9.5 L7 17.5 L0 17.5 Z" fill="#f4c848" stroke="#c08a10" stroke-width="0.9" stroke-linejoin="round"/><rect x="3" y="12" width="1" height="3" fill="#301000"/><rect x="3" y="16" width="1" height="1" fill="#301000"/></svg>
<div class="t" style="left:41px;top:72px;color:#1e1e1e;letter-spacing:0.525px">fcntl.h</div>
<svg class="a" style="left:16px;top:93px;" width="16" height="19" viewBox="0 0 16 19"><rect x="3.5" y="5.5" width="4" height="4" fill="#3a78c0" stroke="#1f5ea8"/><path d="M10.5 5.5 L13.5 5.5 L13.5 14.5 L6.5 14.5 L6.5 11.5 L10.5 11.5 Z" fill="#4a8ac8" stroke="#1f5ea8"/><path d="M3.5 9.5 L7 17.5 L0 17.5 Z" fill="#f4c848" stroke="#c08a10" stroke-width="0.9" stroke-linejoin="round"/><rect x="3" y="12" width="1" height="3" fill="#301000"/><rect x="3" y="16" width="1" height="1" fill="#301000"/></svg>
<div class="t" style="left:41px;top:95px;color:#1e1e1e;letter-spacing:0.150px">os/os.h</div>
<svg class="a" style="left:16px;top:116px;" width="16" height="19" viewBox="0 0 16 19"><rect x="3.5" y="5.5" width="4" height="4" fill="#3a78c0" stroke="#1f5ea8"/><path d="M10.5 5.5 L13.5 5.5 L13.5 14.5 L6.5 14.5 L6.5 11.5 L10.5 11.5 Z" fill="#4a8ac8" stroke="#1f5ea8"/><path d="M3.5 9.5 L7 17.5 L0 17.5 Z" fill="#f4c848" stroke="#c08a10" stroke-width="0.9" stroke-linejoin="round"/><rect x="3" y="12" width="1" height="3" fill="#301000"/><rect x="3" y="16" width="1" height="1" fill="#301000"/></svg>
<div class="t" style="left:41px;top:118px;color:#1e1e1e;letter-spacing:0.082px">os/OS.hxx</div>
<svg class="a" style="left:16px;top:139px;" width="16" height="19" viewBox="0 0 16 19"><rect x="3.5" y="5.5" width="4" height="4" fill="#3a78c0" stroke="#1f5ea8"/><path d="M10.5 5.5 L13.5 5.5 L13.5 14.5 L6.5 14.5 L6.5 11.5 L10.5 11.5 Z" fill="#4a8ac8" stroke="#1f5ea8"/><path d="M3.5 9.5 L7 17.5 L0 17.5 Z" fill="#f4c848" stroke="#c08a10" stroke-width="0.9" stroke-linejoin="round"/><rect x="3" y="12" width="1" height="3" fill="#301000"/><rect x="3" y="16" width="1" height="1" fill="#301000"/></svg>
<div class="t" style="left:41px;top:141px;color:#1e1e1e;letter-spacing:0.368px">if/nmranet_if.h</div>
<svg class="a" style="left:16px;top:162px;" width="16" height="19" viewBox="0 0 16 19"><rect x="3.5" y="5.5" width="4" height="4" fill="#3a78c0" stroke="#1f5ea8"/><path d="M10.5 5.5 L13.5 5.5 L13.5 14.5 L6.5 14.5 L6.5 11.5 L10.5 11.5 Z" fill="#4a8ac8" stroke="#1f5ea8"/><path d="M3.5 9.5 L7 17.5 L0 17.5 Z" fill="#f4c848" stroke="#c08a10" stroke-width="0.9" stroke-linejoin="round"/><rect x="3" y="12" width="1" height="3" fill="#301000"/><rect x="3" y="16" width="1" height="1" fill="#301000"/></svg>
<div class="t" style="left:41px;top:164px;color:#1e1e1e;letter-spacing:0.340px">core/nmranet_nod</div>
<svg class="a" style="left:16px;top:185px;" width="16" height="19" viewBox="0 0 16 19"><rect x="3.5" y="5.5" width="4" height="4" fill="#3a78c0" stroke="#1f5ea8"/><path d="M10.5 5.5 L13.5 5.5 L13.5 14.5 L6.5 14.5 L6.5 11.5 L10.5 11.5 Z" fill="#4a8ac8" stroke="#1f5ea8"/><path d="M3.5 9.5 L7 17.5 L0 17.5 Z" fill="#f4c848" stroke="#c08a10" stroke-width="0.9" stroke-linejoin="round"/><rect x="3" y="12" width="1" height="3" fill="#301000"/><rect x="3" y="16" width="1" height="1" fill="#301000"/></svg>
<div class="t" style="left:41px;top:187px;color:#1e1e1e;letter-spacing:0.342px">core/nmranet_eve</div>
<svg class="a" style="left:19px;top:212px;;will-change:transform" width="20" height="13" viewBox="0 0 20 13"><defs><linearGradient id="bv" x1="0" y1="0" x2="0" y2="1"><stop offset="0" stop-color="#6a9ad0"/><stop offset="0.5" stop-color="#2a66aa"/><stop offset="1" stop-color="#5a8ac4"/></linearGradient></defs><circle cx="5" cy="6" r="5" fill="url(#bv)" stroke="#1f5a9c" stroke-width="0.7"/><text x="15.5" y="6" font-size="10.5" fill="#1f4f8c" font-weight="bold" text-anchor="middle" font-family="Liberation Sans">c</text></svg>
<div class="t" style="left:41px;top:210px;color:#1e1e1e;letter-spacing:0.421px">nmranet_manufa</div>
<svg class="a" style="left:19px;top:235px;;will-change:transform" width="20" height="13" viewBox="0 0 20 13"><defs><linearGradient id="bv" x1="0" y1="0" x2="0" y2="1"><stop offset="0" stop-color="#6a9ad0"/><stop offset="0.5" stop-color="#2a66aa"/><stop offset="1" stop-color="#5a8ac4"/></linearGradient></defs><circle cx="5" cy="6" r="5" fill="url(#bv)" stroke="#1f5a9c" stroke-width="0.7"/><text x="15.5" y="6" font-size="10.5" fill="#1f4f8c" font-weight="bold" text-anchor="middle" font-family="Liberation Sans">c</text></svg>
<div class="t" style="left:41px;top:233px;color:#1e1e1e;letter-spacing:0.392px">nmranet_hardwar</div>
<svg class="a" style="left:19px;top:258px;;will-change:transform" width="20" height="13" viewBox="0 0 20 13"><defs><linearGradient id="bv" x1="0" y1="0" x2="0" y2="1"><stop offset="0" stop-color="#6a9ad0"/><stop offset="0.5" stop-color="#2a66aa"/><stop offset="1" stop-color="#5a8ac4"/></linearGradient></defs><circle cx="5" cy="6" r="5" fill="url(#bv)" stroke="#1f5a9c" stroke-width="0.7"/><text x="15.5" y="6" font-size="10.5" fill="#1f4f8c" font-weight="bold" text-anchor="middle" font-family="Liberation Sans">c</text></svg>
<div class="t" style="left:41px;top:256px;color:#1e1e1e;letter-spacing:0.394px">nmranet_softwar</div>
<svg class="a" style="left:19px;top:281px;;will-change:transform" width="20" height="13" viewBox="0 0 20 13"><defs><linearGradient id="bv" x1="0" y1="0" x2="0" y2="1"><stop offset="0" stop-color="#6a9ad0"/><stop offset="0.5" stop-color="#2a66aa"/><stop offset="1" stop-color="#5a8ac4"/></linearGradient></defs><circle cx="5" cy="6" r="5" fill="url(#bv)" stroke="#1f5a9c" stroke-width="0.7"/><text x="15.5" y="6" font-size="10.5" fill="#1f4f8c" font-weight="bold" text-anchor="middle" font-family="Liberation Sans">c</text></svg>
<div class="t" style="left:41px;top:279px;color:#1e1e1e;letter-spacing:0.115px">main_stack_size</div>
<svg class="a" style="left:19px;top:304px;;will-change:transform" width="20" height="13" viewBox="0 0 20 13"><defs><linearGradient id="bv" x1="0" y1="0" x2="0" y2="1"><stop offset="0" stop-color="#6a9ad0"/><stop offset="0.5" stop-color="#2a66aa"/><stop offset="1" stop-color="#5a8ac4"/></linearGradient></defs><circle cx="5" cy="6" r="5" fill="url(#bv)" stroke="#1f5a9c" stroke-width="0.7"/><text x="15.5" y="6" font-size="10.5" fill="#1f4f8c" font-weight="bold" text-anchor="middle" font-family="Liberation Sans">c</text></svg>
<div class="t" style="left:41px;top:302px;color:#1e1e1e;letter-spacing:0.391px">main_priority <span style='color:#957d47'>: co</span></div>
<svg class="a" style="left:19px;top:327px;;will-change:transform" width="20" height="13" viewBox="0 0 20 13"><defs><linearGradient id="bv" x1="0" y1="0" x2="0" y2="1"><stop offset="0" stop-color="#6a9ad0"/><stop offset="0.5" stop-color="#2a66aa"/><stop offset="1" stop-color="#5a8ac4"/></linearGradient></defs><circle cx="5" cy="6" r="5" fill="url(#bv)" stroke="#1f5a9c" stroke-width="0.7"/><text x="15.5" y="6" font-size="10.5" fill="#1f4f8c" font-weight="bold" text-anchor="middle" font-family="Liberation Sans">c</text></svg>
<div class="t" style="left:41px;top:325px;color:#1e1e1e;letter-spacing:-0.695px">ALIAS_POOL_SIZE</div>
<svg class="a" style="left:19px;top:350px;;will-change:transform" width="20" height="13" viewBox="0 0 20 13"><defs><linearGradient id="bv" x1="0" y1="0" x2="0" y2="1"><stop offset="0" stop-color="#6a9ad0"/><stop offset="0.5" stop-color="#2a66aa"/><stop offset="1" stop-color="#5a8ac4"/></linearGradient></defs><circle cx="5" cy="6" r="5" fill="url(#bv)" stroke="#1f5a9c" stroke-width="0.7"/><text x="15.5" y="6" font-size="10.5" fill="#1f4f8c" font-weight="bold" text-anchor="middle" font-family="Liberation Sans">c</text></svg>
<div class="t" style="left:41px;top:348px;color:#1e1e1e;letter-spacing:-0.669px">DOWNSTREAM_A</div>
<svg class="a" style="left:19px;top:373px;;will-change:transform" width="20" height="13" viewBox="0 0 20 13"><defs><linearGradient id="bv" x1="0" y1="0" x2="0" y2="1"><stop offset="0" stop-color="#6a9ad0"/><stop offset="0.5" stop-color="#2a66aa"/><stop offset="1" stop-color="#5a8ac4"/></linearGradient></defs><circle cx="5" cy="6" r="5" fill="url(#bv)" stroke="#1f5a9c" stroke-width="0.7"/><text x="15.5" y="6" font-size="10.5" fill="#1f4f8c" font-weight="bold" text-anchor="middle" font-family="Liberation Sans">c</text></svg>
<div class="t" style="left:41px;top:371px;color:#1e1e1e;letter-spacing:-0.769px">UPSTREAM_ALIAS</div>
</div>
<div class="a" style="left:989px;top:197px;width:15px;height:396px;background:linear-gradient(90deg,#e6e6e6,#f4f4f4)"></div>
<div class="a" style="left:992px;top:200px;width:9px;height:305px;background:#d4d4d4;border:1px solid #a8a8a8;border-radius:5px"></div>
<div class="a" style="left:836px;top:593px;width:153px;height:15px;background:linear-gradient(#e4e4e4,#f6f6f6)"></div>
<div class="a" style="left:839px;top:596px;width:50px;height:10px;background:#d6d6d6;border:1px solid #a6a6a6;border-radius:5px"></div>
<div class="a" style="left:989px;top:593px;width:15px;height:15px;background:#cbcbcb"></div>
<div class="a" style="left:262px;top:623px;width:749px;height:165px;background:#fff;border-radius:7px"></div>
<svg class="a" style="left:268px;top:629px;" width="16" height="17" viewBox="0 0 16 17"><rect x="1.5" y="1.5" width="12" height="14" fill="#f4f4f4" stroke="#b0b0b0"/><circle cx="5.5" cy="5.5" r="2.5" fill="#e07070"/><path d="M5.5 9 L8.5 14 L2.5 14 Z" fill="#f0c050"/><path d="M10 4 L12 4 M10 7 L12 7 M10 10 L12 10" stroke="#6080c0"/></svg>
<div class="t" style="left:287px;top:630px;font-size:16px;color:#8c8c8c;letter-spacing:0.246px">Problem</div>
<svg class="a" style="left:366px;top:629px;" width="17" height="17" viewBox="0 0 17 17"><rect x="3.5" y="2.5" width="11" height="13" fill="#f8f8f8" stroke="#d0a060"/><rect x="6" y="1" width="6" height="3" fill="#a0b0d0"/><path d="M1 9 L4 13 L9 5" stroke="#3a7ad0" stroke-width="1.5" fill="none"/><path d="M9 8 L13 8 M9 11 L13 11" stroke="#6080a0"/></svg>
<div class="t" style="left:385px;top:630px;font-size:16px;color:#8c8c8c;letter-spacing:-0.150px">Tasks</div>
<svg class="a" style="left:747px;top:626px;" width="20" height="20" viewBox="0 0 20 20"><defs><radialGradient id="bug747_626" cx="0.3" cy="0.3" r="0.8"><stop offset="0" stop-color="#f0f8e0"/><stop offset="1" stop-color="#a8d0a0"/></radialGradient></defs><path d="M7.5 5 L7.5 9 M3 8.5 L7.5 8.5 M11.5 6 L11 8.5 M13.5 9.5 L16.5 10.5 M3 11.5 L6 12.5 L6.5 16 L5.5 17 M15 13.5 L17.5 14.5 M9.5 17 L9 19.5 L8.5 20" stroke="#6a8a7a" stroke-width="1.1" fill="none"/><ellipse cx="10.8" cy="12.5" rx="3.6" ry="5.2" transform="rotate(-45 10.8 12.5)" fill="url(#bug747_626)" stroke="#6a9aaa" stroke-width="1"/><path d="M9 10.5 L13 14.5" stroke="#a8d0a0" stroke-width="0.8" stroke-dasharray="1 1"/></svg>
<div class="t" style="left:770px;top:630px;font-size:16px;color:#8c8c8c;letter-spacing:0.425px">Debug</div>
<svg class="a" style="left:826px;top:631px;" width="18" height="16" viewBox="0 0 18 16"><rect x="1" y="3" width="12" height="6" fill="#d8e0d8" stroke="#90a890"/><rect x="1" y="3" width="7" height="6" fill="#70b070"/><circle cx="13" cy="11" r="4" fill="#40a040"/><path d="M12 9 L15 11 L12 13 Z" fill="#fff"/></svg>
<div class="t" style="left:845px;top:630px;font-size:16px;color:#8c8c8c;letter-spacing:-0.004px">Progress</div>
<div class="a" style="left:959px;top:633px;width:11px;height:5px;border:1.3px solid #111;background:#fff;border-radius:1px"></div>
<div class="a" style="left:985px;top:633px;width:11px;height:11px;border:1.3px solid #111;border-top-width:2.3px;background:#fafafa"></div>
<svg class="a" style="left:855px;top:659px;" width="18" height="16" viewBox="0 0 18 16"><rect x="6.5" y="1.5" width="10" height="13" fill="#fff" stroke="#5070a0"/><path d="M9 5 L15 5 M11 8 L15 8 M9 11 L15 11" stroke="#3060b0"/><path d="M1 8 L6 4 L6 6 L10 6 L10 10 L6 10 L6 12 Z" fill="#f8d060" stroke="#c08020"/></svg>
<div class="a" style="left:883px;top:660px;width:1px;height:14px;background:#d8d8d8"></div>
<svg class="a" style="left:894px;top:659px;" width="17" height="16" viewBox="0 0 17 16"><rect x="1.5" y="5.5" width="11" height="9" fill="#e0e0e0" stroke="#b5b5b5"/><rect x="1.5" y="5.5" width="11" height="2" fill="#b5b5b5"/><path d="M9 9 L15 2" stroke="#b5b5b5" stroke-width="2"/></svg>
<svg class="a" style="left:919px;top:658px;" width="18" height="18" viewBox="0 0 18 18"><rect x="1.5" y="1.5" width="13" height="10" fill="#e8e8e8" stroke="#b5b5b5"/><path d="M4 5 L12 5 M4 8 L10 8" stroke="#b5b5b5"/><path d="M8 12 L8 15 M4 15.5 L12 15.5" stroke="#b5b5b5" stroke-width="1.5"/></svg>
<svg class="a" style="left:945px;top:664px;" width="8" height="5" viewBox="0 0 8 5"><path d="M0 0 L8 0 L4 5 Z" fill="#9a9a9a"/></svg>
<svg class="a" style="left:963px;top:659px;" width="17" height="16" viewBox="0 0 17 16"><rect x="1.5" y="3.5" width="12" height="11" fill="#eaf4fb" stroke="#c8a050"/><rect x="1.5" y="3" width="9" height="2" fill="#3c82d0"/><path d="M13 2 L13 8 M10 5 L16 5" stroke="#d0a020" stroke-width="2"/><path d="M13 2.5 L13 7.5 M10.5 5 L15.5 5" stroke="#fff8d0" stroke-width="1"/><path d="M4 14 Q11 13 12 7" stroke="#f0d060" fill="none"/></svg>
<svg class="a" style="left:990px;top:664px;" width="8" height="5" viewBox="0 0 8 5"><path d="M0 0 L8 0 L4 5 Z" fill="#5a5a5a"/></svg>
<div class="t" style="left:269px;top:680px;color:#2e2e2e;letter-spacing:0.256px">No consoles to display</div>
<div class="a" style="left:269px;top:697px;width:150px;height:1px;background:#e4e4e4"></div>
<div class="t" style="left:4px;top:799px;color:#2e2e2e;letter-spacing:0.398px">0 items selected</div>
<svg class="a" style="left:696px;top:796px;" width="2" height="14" viewBox="0 0 2 14"><rect x="0" y="0" width="1" height="2" fill="#a0926e"/><rect x="0" y="4" width="1" height="2" fill="#a0926e"/><rect x="0" y="8" width="1" height="2" fill="#a0926e"/><rect x="0" y="12" width="1" height="2" fill="#a0926e"/></svg>
<div class="a" style="left:420px;top:22px;width:42px;height:21px;background:linear-gradient(#353535,#464646 30%,#404040)"></div>
<div class="t" style="left:429px;top:24px;color:#fafafa;letter-spacing:-0.250px">Run</div>
<div class="a" style="left:420px;top:43px;width:322px;height:659px;background:#6b6b6b;border-top:1px solid #3c3c3c;border-left:1px solid #464646;border-bottom:1px solid #404040;border-right:1px solid #3c3c3c"></div>
<svg class="a" style="left:428px;top:46px;" width="17" height="17" viewBox="0 0 17 17"><rect x="1" y="3" width="3" height="11" fill="#8e8e8e"/><path d="M6 3.5 L13 8.5 L6 13.5 Z" fill="#7c7c7c" stroke="#8e8e8e" stroke-width="0.6"/></svg>
<div class="t" style="left:449px;top:46px;color:#929292;letter-spacing:0.000px">Resume</div>
<div class="t" style="left:500px;top:46px;width:231px;text-align:right;color:#929292;letter-spacing:-0.289px">F8</div>
<svg class="a" style="left:428px;top:67px;" width="17" height="17" viewBox="0 0 17 17"><rect x="2" y="3" width="4" height="11" fill="#9a9a9a" stroke="#7a7a7a" stroke-width="0.6"/><rect x="8" y="3" width="4" height="11" fill="#9a9a9a" stroke="#7a7a7a" stroke-width="0.6"/></svg>
<div class="t" style="left:449px;top:67px;color:#929292;letter-spacing:0.105px">Suspend</div>
<svg class="a" style="left:428px;top:88px;" width="17" height="17" viewBox="0 0 17 17"><rect x="2.5" y="3.5" width="10" height="10" fill="#6a6262" stroke="#8a8a8a"/></svg>
<div class="t" style="left:449px;top:88px;color:#929292;letter-spacing:0.330px">Terminate</div>
<div class="t" style="left:500px;top:88px;width:231px;text-align:right;color:#929292;letter-spacing:0.500px">Ctrl+F2</div>
<svg class="a" style="left:428px;top:109px;" width="17" height="17" viewBox="0 0 17 17"><path d="M2 14 L6 6 L9 11 L13 3" fill="none" stroke="#888" stroke-width="1"/><circle cx="3" cy="14" r="1.5" fill="#888"/><path d="M12 1 L14 3 M14 1 L12 3" stroke="#888"/></svg>
<div class="t" style="left:449px;top:109px;color:#929292;letter-spacing:0.295px">Disconnect</div>
<svg class="a" style="left:428px;top:130px;" width="17" height="17" viewBox="0 0 17 17"><path d="M1 4 L9 4 L9 11" fill="none" stroke="#999" stroke-width="1.4"/><path d="M6 9 L9 12 L12 9" fill="none" stroke="#999" stroke-width="1.2"/><path d="M1 14 L4 14 M12 14 L15 14" stroke="#888"/></svg>
<div class="t" style="left:449px;top:130px;color:#929292;letter-spacing:0.311px">Step Into</div>
<div class="t" style="left:500px;top:130px;width:231px;text-align:right;color:#929292;letter-spacing:-0.289px">F5</div>
<svg class="a" style="left:428px;top:151px;" width="17" height="17" viewBox="0 0 17 17"><path d="M2 10 Q2 4 8 4 Q14 4 14 10" fill="none" stroke="#999" stroke-width="1.4"/><path d="M11 8 L14 11 L16 8" fill="none" stroke="#999" stroke-width="1.2"/></svg>
<div class="t" style="left:449px;top:151px;color:#929292;letter-spacing:0.219px">Step Over</div>
<div class="t" style="left:500px;top:151px;width:231px;text-align:right;color:#929292;letter-spacing:-0.289px">F6</div>
<svg class="a" style="left:428px;top:172px;" width="17" height="17" viewBox="0 0 17 17"><path d="M9 14 L9 7 L13 7" fill="none" stroke="#999" stroke-width="1.4"/><path d="M11 4 L14 7 L11 10" fill="none" stroke="#999" stroke-width="1.2"/><path d="M1 14 L4 14" stroke="#888"/></svg>
<div class="t" style="left:449px;top:172px;color:#929292;letter-spacing:0.196px">Step Return</div>
<div class="t" style="left:500px;top:172px;width:231px;text-align:right;color:#929292;letter-spacing:-0.289px">F7</div>
<svg class="a" style="left:428px;top:193px;" width="17" height="17" viewBox="0 0 17 17"><path d="M1 8 L10 8 M7 5 L10 8 L7 11" fill="none" stroke="#999" stroke-width="1.3"/><path d="M14 2 L14 4 M14 7 L14 9 M14 12 L14 14" stroke="#888"/></svg>
<div class="t" style="left:449px;top:193px;color:#929292;letter-spacing:0.158px">Run to Line</div>
<div class="t" style="left:500px;top:193px;width:231px;text-align:right;color:#929292;letter-spacing:0.500px">Ctrl+R</div>
<div class="t" style="left:449px;top:214px;color:#f4f4f4;letter-spacing:0.095px">Use Step Filters</div>
<div class="a" style="left:426px;top:237px;width:306px;height:1px;background:linear-gradient(90deg,rgba(80,80,80,0),#585858 8%,#585858 92%,rgba(80,80,80,0))"></div>
<div class="a" style="left:426px;top:238px;width:306px;height:1px;background:linear-gradient(90deg,rgba(120,120,120,0),#767676 8%,#767676 92%,rgba(120,120,120,0))"></div>
<svg class="a" style="left:428px;top:243px;" width="17" height="17" viewBox="0 0 17 17"><defs><radialGradient id="g_run" cx="0.35" cy="0.3" r="0.75"><stop offset="0" stop-color="#a8f0a0"/><stop offset="0.5" stop-color="#40a040"/><stop offset="1" stop-color="#187828"/></radialGradient></defs><circle cx="5.5" cy="5.5" r="5.4" fill="url(#g_run)" stroke="#1a5a22" stroke-width="0.5"/><path d="M3.6 2.6 L8.8 5.6 L3.6 8.8 Z" fill="#fff"/><path d="M7 10.5 Q9 8.5 11 10 L11 8.5 L15.5 12.2 L11 16 L11 14 Q9 13.5 8 12 Z" fill="#f4c030" stroke="#b07a10" stroke-width="0.7" stroke-linejoin="round"/></svg>
<div class="t" style="left:449px;top:243px;color:#f4f4f4;letter-spacing:-0.250px">Run</div>
<div class="t" style="left:500px;top:243px;width:231px;text-align:right;color:#d6d6d6;letter-spacing:0.627px">Ctrl+F11</div>
<svg class="a" style="left:428px;top:264px;" width="17" height="17" viewBox="0 0 17 17"><ellipse cx="5.5" cy="5.5" rx="2.6" ry="3.4" fill="#5aa080" stroke="#2a6a6a" stroke-width="0.8" transform="rotate(-45 5.5 5.5)"/><path d="M1 5.5 L2.5 5.5 M8.5 5.5 L10 5.5 M5.5 1 L5.5 2.3 M2 2 L3 3 M8 8 L9 9 M2 9 L3 8 M8.5 2 L7.5 3" stroke="#8ad0c0" stroke-width="0.8"/><path d="M7 10.5 Q9 8.5 11 10 L11 8.5 L15.5 12.2 L11 16 L11 14 Q9 13.5 8 12 Z" fill="#f4c030" stroke="#b07a10" stroke-width="0.7" stroke-linejoin="round"/></svg>
<div class="t" style="left:449px;top:264px;color:#f4f4f4;letter-spacing:0.303px">Debug</div>
<div class="t" style="left:500px;top:264px;width:231px;text-align:right;color:#d6d6d6;letter-spacing:0.312px">F11</div>
<svg class="a" style="left:428px;top:285px;" width="17" height="17" viewBox="0 0 17 17"><defs><radialGradient id="g_prof" cx="0.35" cy="0.3" r="0.75"><stop offset="0" stop-color="#a8f0a0"/><stop offset="0.5" stop-color="#40a040"/><stop offset="1" stop-color="#187828"/></radialGradient></defs><circle cx="5.5" cy="5.5" r="5.4" fill="url(#g_prof)" stroke="#1a5a22" stroke-width="0.5"/><path d="M3.6 2.6 L8.8 5.6 L3.6 8.8 Z" fill="#fff"/><circle cx="4.5" cy="13" r="3.2" fill="#fff" stroke="#1a5ac0" stroke-width="1.1"/><path d="M4.5 11 L4.5 13 L6 14" stroke="#1a5ac0" stroke-width="0.8" fill="none"/><path d="M9 10.5 L15 10.5 M9 13 L15 13 M9 15.5 L15 15.5" stroke="#7090c8" stroke-width="0.9"/></svg>
<div class="t" style="left:449px;top:285px;color:#f4f4f4;letter-spacing:0.107px">Profi<u>l</u>e</div>
<div class="a" style="left:426px;top:308px;width:306px;height:1px;background:linear-gradient(90deg,rgba(80,80,80,0),#585858 8%,#585858 92%,rgba(80,80,80,0))"></div>
<div class="a" style="left:426px;top:309px;width:306px;height:1px;background:linear-gradient(90deg,rgba(120,120,120,0),#767676 8%,#767676 92%,rgba(120,120,120,0))"></div>
<div class="t" style="left:449px;top:314px;color:#f4f4f4;letter-spacing:0.245px">Profile Histor<u>y</u></div>
<svg class="a" style="left:729px;top:318px;" width="5" height="9" viewBox="0 0 5 9"><path d="M0.5 0.5 L4.5 4.5 L0.5 8.5 Z" fill="#e0e0e0"/></svg>
<div class="t" style="left:449px;top:335px;color:#f4f4f4;letter-spacing:0.106px">Pro<u>fi</u>le As</div>
<svg class="a" style="left:729px;top:339px;" width="5" height="9" viewBox="0 0 5 9"><path d="M0.5 0.5 L4.5 4.5 L0.5 8.5 Z" fill="#e0e0e0"/></svg>
<div class="t" style="left:449px;top:356px;color:#f4f4f4;letter-spacing:0.254px"><u>P</u>rofile Configurations...</div>
<div class="a" style="left:426px;top:379px;width:306px;height:1px;background:linear-gradient(90deg,rgba(80,80,80,0),#585858 8%,#585858 92%,rgba(80,80,80,0))"></div>
<div class="a" style="left:426px;top:380px;width:306px;height:1px;background:linear-gradient(90deg,rgba(120,120,120,0),#767676 8%,#767676 92%,rgba(120,120,120,0))"></div>
<div class="t" style="left:449px;top:385px;color:#f4f4f4;letter-spacing:0.197px">Run History</div>
<svg class="a" style="left:729px;top:389px;" width="5" height="9" viewBox="0 0 5 9"><path d="M0.5 0.5 L4.5 4.5 L0.5 8.5 Z" fill="#e0e0e0"/></svg>
<div class="t" style="left:449px;top:406px;color:#f4f4f4;letter-spacing:-0.073px">Run As</div>
<svg class="a" style="left:729px;top:410px;" width="5" height="9" viewBox="0 0 5 9"><path d="M0.5 0.5 L4.5 4.5 L0.5 8.5 Z" fill="#e0e0e0"/></svg>
<div class="t" style="left:449px;top:427px;color:#f4f4f4;letter-spacing:0.231px">Run Configurations...</div>
<div class="a" style="left:426px;top:450px;width:306px;height:1px;background:linear-gradient(90deg,rgba(80,80,80,0),#585858 8%,#585858 92%,rgba(80,80,80,0))"></div>
<div class="a" style="left:426px;top:451px;width:306px;height:1px;background:linear-gradient(90deg,rgba(120,120,120,0),#767676 8%,#767676 92%,rgba(120,120,120,0))"></div>
<div class="t" style="left:449px;top:456px;color:#f4f4f4;letter-spacing:0.341px">Debug History</div>
<svg class="a" style="left:729px;top:460px;" width="5" height="9" viewBox="0 0 5 9"><path d="M0.5 0.5 L4.5 4.5 L0.5 8.5 Z" fill="#e0e0e0"/></svg>
<div class="t" style="left:449px;top:477px;color:#f4f4f4;letter-spacing:0.229px">Debug As</div>
<svg class="a" style="left:729px;top:481px;" width="5" height="9" viewBox="0 0 5 9"><path d="M0.5 0.5 L4.5 4.5 L0.5 8.5 Z" fill="#e0e0e0"/></svg>
<div class="t" style="left:449px;top:498px;color:#f4f4f4;letter-spacing:0.310px">Debug Configurations...</div>
<div class="a" style="left:426px;top:521px;width:306px;height:1px;background:linear-gradient(90deg,rgba(80,80,80,0),#585858 8%,#585858 92%,rgba(80,80,80,0))"></div>
<div class="a" style="left:426px;top:522px;width:306px;height:1px;background:linear-gradient(90deg,rgba(120,120,120,0),#767676 8%,#767676 92%,rgba(120,120,120,0))"></div>
<svg class="a" style="left:428px;top:527px;" width="17" height="17" viewBox="0 0 17 17"><circle cx="7.5" cy="8.5" r="4" fill="none" stroke="#959595" stroke-width="1.2"/><circle cx="7.5" cy="8.5" r="2" fill="#8a8a8a"/></svg>
<div class="t" style="left:449px;top:527px;color:#929292;letter-spacing:0.266px">Toggle Breakpoint</div>
<div class="t" style="left:500px;top:527px;width:231px;text-align:right;color:#929292;letter-spacing:0.658px">Shift+Ctrl+B</div>
<svg class="a" style="left:428px;top:548px;" width="17" height="17" viewBox="0 0 17 17"><circle cx="7.5" cy="8.5" r="4" fill="none" stroke="#959595" stroke-width="1.2"/><circle cx="7.5" cy="8.5" r="2" fill="#8a8a8a"/></svg>
<div class="t" style="left:449px;top:548px;color:#929292;letter-spacing:0.245px">Toggle Line Breakpoint</div>
<svg class="a" style="left:428px;top:569px;" width="17" height="17" viewBox="0 0 17 17"><circle cx="7.5" cy="8.5" r="4" fill="none" stroke="#959595" stroke-width="1.2"/><circle cx="7.5" cy="8.5" r="2" fill="#8a8a8a"/></svg>
<div class="t" style="left:449px;top:569px;color:#929292;letter-spacing:0.285px">Toggle Method Breakpoint</div>
<svg class="a" style="left:428px;top:590px;" width="17" height="17" viewBox="0 0 17 17"><circle cx="5" cy="4.5" r="3" fill="none" stroke="#999"/><circle cx="11" cy="4.5" r="3" fill="none" stroke="#999"/><path d="M4 15 L13 6 L15 8 L6 17 Z" fill="none" stroke="#999"/></svg>
<div class="t" style="left:449px;top:590px;color:#929292;letter-spacing:0.289px">Toggle Watchpoint</div>
<div class="t" style="left:449px;top:611px;color:#f4f4f4;letter-spacing:0.284px">Skip All Breakpoints</div>
<svg class="a" style="left:428px;top:632px;" width="17" height="17" viewBox="0 0 17 17"><path d="M2 2 L15 15 M15 2 L2 15" stroke="#a8a8a8" stroke-width="2"/><circle cx="6" cy="10" r="3" fill="#888"/><circle cx="11" cy="12" r="3" fill="#999"/></svg>
<div class="t" style="left:449px;top:632px;color:#f4f4f4;letter-spacing:0.268px">Remove All Breakpoints</div>
<div class="t" style="left:449px;top:653px;color:#f4f4f4;letter-spacing:0.217px">Breakpoint Types</div>
<svg class="a" style="left:729px;top:657px;" width="5" height="9" viewBox="0 0 5 9"><path d="M0.5 0.5 L4.5 4.5 L0.5 8.5 Z" fill="#e0e0e0"/></svg>
<div class="a" style="left:426px;top:676px;width:306px;height:1px;background:linear-gradient(90deg,rgba(80,80,80,0),#585858 8%,#585858 92%,rgba(80,80,80,0))"></div>
<div class="a" style="left:426px;top:677px;width:306px;height:1px;background:linear-gradient(90deg,rgba(120,120,120,0),#767676 8%,#767676 92%,rgba(120,120,120,0))"></div>
<div class="a" style="left:421px;top:680px;width:320px;height:21px;background:linear-gradient(#4a4a4a,#383838 40%,#2e2e2e);border-top:1px solid #2a2a2a;border-bottom:1px solid #262626"></div>
<svg class="a" style="left:428px;top:682px;" width="18" height="18" viewBox="0 0 18 18"><defs><radialGradient id="gr4" cx="0.4" cy="0.3" r="0.7"><stop offset="0" stop-color="#90e090"/><stop offset="1" stop-color="#187828"/></radialGradient></defs><circle cx="7" cy="7" r="6.3" fill="url(#gr4)" stroke="#156a25" stroke-width="0.6"/><path d="M5 3.5 L10.5 7 L5 10.5 Z" fill="#fff"/><rect x="7.5" y="11.5" width="9" height="5.5" rx="1" fill="#e03a3a" stroke="#901010" stroke-width="0.7"/><rect x="10" y="9.5" width="4" height="2.5" fill="none" stroke="#901010" stroke-width="0.8"/><path d="M8 14 L16 14" stroke="#ffb0b0" stroke-width="0.8"/></svg>
<div class="t" style="left:449px;top:682px;color:#f4f4f4;letter-spacing:0.172px">External Tools</div>
<svg class="a" style="left:729px;top:686px;" width="5" height="9" viewBox="0 0 5 9"><path d="M0.5 0.5 L4.5 4.5 L0.5 8.5 Z" fill="#e0e0e0"/></svg>
<div class="a" style="left:740px;top:679px;width:259px;height:115px;background:#6b6b6b;border:1px solid #3c3c3c"></div>
<svg class="a" style="left:746px;top:682px;" width="18" height="18" viewBox="0 0 18 18"><defs><radialGradient id="gr4" cx="0.4" cy="0.3" r="0.7"><stop offset="0" stop-color="#90e090"/><stop offset="1" stop-color="#187828"/></radialGradient></defs><circle cx="7" cy="7" r="6.3" fill="url(#gr4)" stroke="#156a25" stroke-width="0.6"/><path d="M5 3.5 L10.5 7 L5 10.5 Z" fill="#fff"/><rect x="7.5" y="11.5" width="9" height="5.5" rx="1" fill="#e03a3a" stroke="#901010" stroke-width="0.7"/><rect x="10" y="9.5" width="4" height="2.5" fill="none" stroke="#901010" stroke-width="0.8"/><path d="M8 14 L16 14" stroke="#ffb0b0" stroke-width="0.8"/></svg>
<div class="t" style="left:769px;top:682px;color:#f4f4f4;letter-spacing:0.336px">1 openocd-0.6.1-stellaris-9d96</div>
<svg class="a" style="left:746px;top:703px;" width="18" height="18" viewBox="0 0 18 18"><defs><radialGradient id="gr4" cx="0.4" cy="0.3" r="0.7"><stop offset="0" stop-color="#90e090"/><stop offset="1" stop-color="#187828"/></radialGradient></defs><circle cx="7" cy="7" r="6.3" fill="url(#gr4)" stroke="#156a25" stroke-width="0.6"/><path d="M5 3.5 L10.5 7 L5 10.5 Z" fill="#fff"/><rect x="7.5" y="11.5" width="9" height="5.5" rx="1" fill="#e03a3a" stroke="#901010" stroke-width="0.7"/><rect x="10" y="9.5" width="4" height="2.5" fill="none" stroke="#901010" stroke-width="0.8"/><path d="M8 14 L16 14" stroke="#ffb0b0" stroke-width="0.8"/></svg>
<div class="t" style="left:769px;top:703px;color:#f4f4f4;letter-spacing:0.325px">2 openocd-0.6.1-stellaris</div>
<div class="a" style="left:748px;top:725px;width:244px;height:1px;background:linear-gradient(90deg,rgba(80,80,80,0),#585858 8%,#585858 92%,rgba(80,80,80,0))"></div>
<div class="a" style="left:748px;top:726px;width:244px;height:1px;background:linear-gradient(90deg,rgba(120,120,120,0),#767676 8%,#767676 92%,rgba(120,120,120,0))"></div>
<div class="t" style="left:769px;top:732px;color:#f4f4f4;letter-spacing:-0.073px">Run As</div>
<svg class="a" style="left:986px;top:736px;" width="5" height="9" viewBox="0 0 5 9"><path d="M0.5 0.5 L4.5 4.5 L0.5 8.5 Z" fill="#e0e0e0"/></svg>
<div class="a" style="left:741px;top:751px;width:257px;height:21px;background:linear-gradient(#4a4a4a,#383838 40%,#2e2e2e);border-top:1px solid #2a2a2a;border-bottom:1px solid #262626"></div>
<div class="t" style="left:769px;top:753px;color:#f4f4f4;letter-spacing:0.250px">External Tools Configurations...</div>
<div class="t" style="left:769px;top:774px;color:#f4f4f4;letter-spacing:0.170px">Organize Favorites...</div>
<svg class="a" style="left:845px;top:757px;" width="14" height="21" viewBox="0 0 14 21"><path d="M1.5 1.5 L1.5 16 L5 12.5 L7.5 18.5 L10 17.5 L7.5 11.5 L12 11.5 Z" fill="#fff" stroke="#000" stroke-width="1.5" stroke-linejoin="round"/></svg>
<div class="a" style="left:0px;top:22px;width:1px;height:804px;background:#9db2ca"></div>
<div class="a" style="left:1015px;top:22px;width:1px;height:804px;background:#9db2ca"></div>
<div class="a" style="left:1px;top:822px;width:1014px;height:3px;background:#cfcfcf"></div>
<div class="a" style="left:0px;top:825px;width:1016px;height:1px;background:#9db2ca"></div>
<div class="a" style="left:0px;top:0px;width:1016px;height:1px;background:#a4b5c8"></div>
<svg class="a" style="left:0px;top:0px;" width="5" height="5" viewBox="0 0 5 5"><path d="M0 0 L4 0 L4 1 L2 1 L1 2 L1 4 L0 4 Z" fill="#000"/></svg>
<svg class="a" style="left:1011px;top:0px;" width="5" height="5" viewBox="0 0 5 5"><path d="M5 0 L1 0 L1 1 L3 1 L4 2 L4 4 L5 4 Z" fill="#000"/></svg>
</body></html>
